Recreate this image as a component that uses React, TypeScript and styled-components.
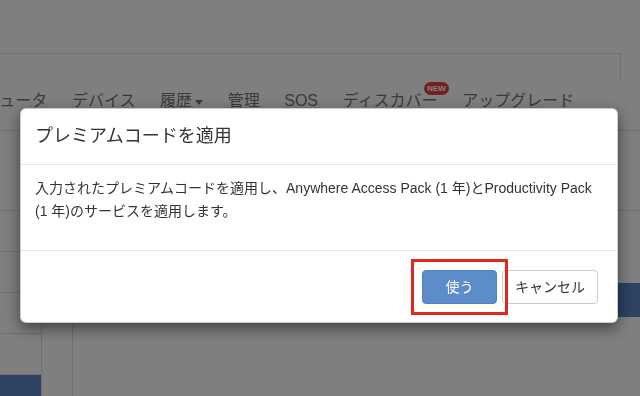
import React, { FC } from "react";
import styled, { createGlobalStyle } from "styled-components";

const GlobalStyle = createGlobalStyle`
  html, body {
    margin: 0;
    padding: 0;
    background: #fff;
  }
  body {
    font-family: "Liberation Sans", "Noto Sans CJK JP", sans-serif;
    font-size: 14px;
    color: #333;
  }
  * {
    box-sizing: border-box;
  }
`;

const Page = styled.div`
  width: 640px;
  height: 396px;
  overflow: hidden;
  background: #fff;
`;

const TopSpace = styled.div`
  height: 53px;
`;

const SearchBox = styled.div`
  margin-left: -10px;
  width: 631px;
  height: 27px;
  border-top: 1px solid #e0e0e0;
  border-right: 1px solid #e0e0e0;
`;

const Nav = styled.nav`
  display: flex;
  height: 51px;
  margin-left: -61px;
  padding-top: 10px;
  border-bottom: 1px solid #e0e0e0;
  width: 800px;
`;

const NavItem = styled.div`
  position: relative;
  display: flex;
  align-items: flex-start;
  padding: 0 12.3px;
  font-size: 16px;
  line-height: 22px;
  color: #777;
  white-space: nowrap;
`;

const Caret = styled.span`
  display: inline-block;
  margin: 10px 0 0 3px;
  border-top: 5px solid #777;
  border-left: 4px solid transparent;
  border-right: 4px solid transparent;
`;

const NewBadge = styled.span`
  position: absolute;
  top: -8px;
  right: 1px;
  padding: 0 3px;
  border-radius: 7px;
  background: #e2453f;
  color: #fff;
  font-size: 8px;
  font-weight: bold;
  line-height: 13px;
`;

const Main = styled.div`
  display: flex;
  height: 300px;
`;

const Sidebar = styled.div`
  width: 142px;
  margin-left: -100px;
  padding-top: 79px;
  border-right: 1px solid #e0e0e0;
`;

const SideItem = styled.div<{ $active?: boolean }>`
  height: 41px;
  border-top: 1px solid #e0e0e0;
  background: ${p => (p.$active ? "#5c84c6" : "transparent")};
`;

const Content = styled.div`
  flex: 1;
  margin-left: 30px;
  border-left: 1px solid #e0e0e0;
`;

const ContentHead = styled.div`
  height: 80px;
  border-bottom: 1px solid #e0e0e0;
`;

const Toolbar = styled.div`
  display: flex;
  justify-content: flex-end;
  padding-top: 72px;
  margin-right: -40px;
`;

const PageButton = styled.div`
  width: 160px;
  height: 34px;
  border-radius: 4px;
  background: #5c84c6;
`;

const Backdrop = styled.div`
  position: fixed;
  inset: 0;
  background: rgba(0, 0, 0, 0.5);
  padding: 108px 0 0 20px;
`;

const Dialog = styled.div`
  width: 598px;
  background: #fff;
  border: 1px solid rgba(0, 0, 0, 0.2);
  border-radius: 6px;
  box-shadow: 0 5px 15px rgba(0, 0, 0, 0.5);
`;

const DialogHeader = styled.div`
  padding: 15px 14px;
  border-bottom: 1px solid #e5e5e5;
`;

const Title = styled.h4`
  margin: 0;
  font-size: 18px;
  font-weight: normal;
  line-height: 25px;
  color: #333;
`;

const DialogBody = styled.div`
  padding: 12px 14px 27px;
`;

const Message = styled.p`
  margin: 0;
  font-size: 14px;
  line-height: 23px;
  color: #333;
  white-space: nowrap;
`;

const DialogFooter = styled.div`
  display: flex;
  justify-content: flex-end;
  gap: 5px;
  padding: 19px 19px 18px;
  border-top: 1px solid #e5e5e5;
`;

const Highlighted = styled.div`
  position: relative;
  display: flex;
`;

const RedFrame = styled.div`
  position: absolute;
  inset: -11px;
  border: 3px solid #e0281b;
  pointer-events: none;
`;

const Button = styled.button<{ $primary?: boolean }>`
  height: 34px;
  min-width: ${p => (p.$primary ? "75px" : "0")};
  padding: 0 12px;
  border: 1px solid ${p => (p.$primary ? "#5181c0" : "#ccc")};
  border-radius: 4px;
  background: ${p => (p.$primary ? "#5d8cca" : "#fff")};
  color: ${p => (p.$primary ? "#fff" : "#333")};
  font-family: inherit;
  font-size: 14px;
  line-height: 20px;
`;

const navItems = ["コンピュータ", "デバイス", "履歴", "管理", "SOS", "ディスカバー", "アップグレード"];

const App: FC = () => (
  <Page>
    <GlobalStyle />
    <TopSpace />
    <SearchBox />
    <Nav>
      {navItems.map(item => (
        <NavItem key={item}>
          {item}
          {item === "履歴" && <Caret />}
          {item === "ディスカバー" && <NewBadge>NEW</NewBadge>}
        </NavItem>
      ))}
    </Nav>
    <Main>
      <Sidebar>
        <SideItem />
        <SideItem />
        <SideItem />
        <SideItem />
        <SideItem $active />
      </Sidebar>
      <Content>
        <ContentHead />
        <Toolbar>
          <PageButton />
        </Toolbar>
      </Content>
    </Main>

    <Backdrop>
      <Dialog>
        <DialogHeader>
          <Title>プレミアムコードを適用</Title>
        </DialogHeader>
        <DialogBody>
          <Message>
            入力されたプレミアムコードを適用し、Anywhere Access Pack (1 年)とProductivity Pack
            <br />
            (1 年)のサービスを適用します。
          </Message>
        </DialogBody>
        <DialogFooter>
          <Highlighted>
            <Button $primary>使う</Button>
            <RedFrame />
          </Highlighted>
          <Button>キャンセル</Button>
        </DialogFooter>
      </Dialog>
    </Backdrop>
  </Page>
);

export default App;
